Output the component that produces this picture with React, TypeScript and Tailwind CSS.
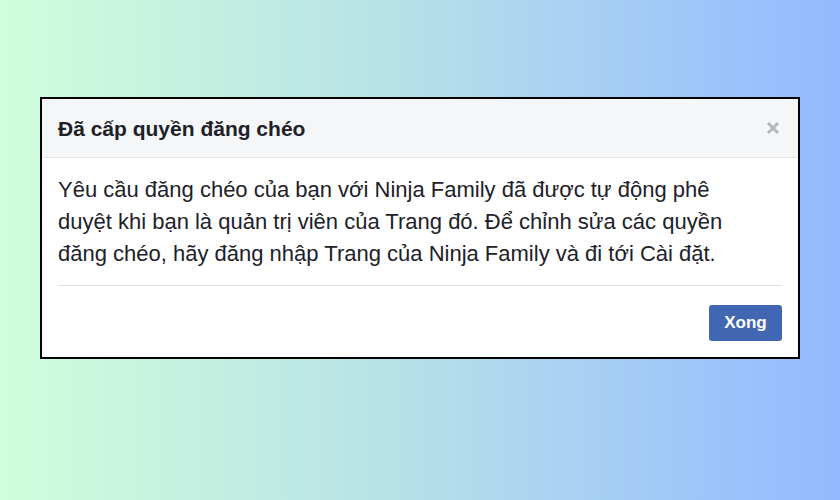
/**
 * App.tsx — "Đã cấp quyền đăng chéo" confirmation dialog on a gradient backdrop.
 */

function CloseIcon() {
  return (
    <svg width="14" height="14" viewBox="0 0 14 14" aria-hidden="true">
      <path d="M2 2 L12 12 M12 2 L2 12" stroke="#b4b6bb" strokeWidth="3" strokeLinecap="butt" />
    </svg>
  );
}

export default function App() {
  return (
    <div
      className="w-[840px] h-[500px] bg-[linear-gradient(90deg,#d0fedb_0%,#b8e3e6_45%,#a7d0f3_70%,#94b9ff_100%)] pt-[97px] pl-[40px]"
      style={{ fontFamily: '"Liberation Sans", Arial, sans-serif' }}
    >
      <div className="w-[760px] h-[262px] border-2 border-black bg-white flex flex-col">
        {/* Header */}
        <div className="h-[59px] shrink-0 bg-[#f5f6f7] border-b border-[#e5e5e5] flex items-center justify-between pl-[16px] pr-[18px]">
          <h1 className="text-[21px] font-bold text-[#1d2129] leading-none">Đã cấp quyền đăng chéo</h1>
          <CloseIcon />
        </div>

        {/* Body */}
        <div className="px-[16px] pt-[16px]">
          <p className="text-[22px] leading-[32px] text-[#1d2129]">
            Yêu cầu đăng chéo của bạn với Ninja Family đã được tự động phê
            <br />
            duyệt khi bạn là quản trị viên của Trang đó. Để chỉnh sửa các quyền
            <br />
            đăng chéo, hãy đăng nhập Trang của Ninja Family và đi tới Cài đặt.
          </p>
          <div className="mt-[15px] h-px bg-[#e2e2e2]" />
        </div>

        {/* Footer */}
        <div className="flex justify-end px-[16px] pt-[19px]">
          <button className="w-[73px] h-[36px] rounded-[3px] bg-[#4267b2] text-white text-[17px] font-bold">
            Xong
          </button>
        </div>
      </div>
    </div>
  );
}
